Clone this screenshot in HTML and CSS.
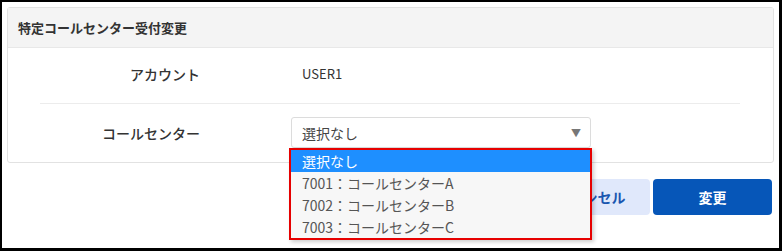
FILE: index.html
```html
<!DOCTYPE html>
<html lang="ja">
<head>
    <meta charset="UTF-8">
    <meta name="viewport" content="width=device-width, initial-scale=1.0">
    <title>特定コールセンター受付変更</title>
    <link rel="stylesheet" href="styles.css">
</head>
<body>
    <div class="screen">
        <div class="panel">
            <div class="panel-head">特定コールセンター受付変更</div>
            <div class="panel-body">
                <div class="row row-account">
                    <div class="label">アカウント</div>
                    <div class="value value-text">USER1</div>
                </div>
                <div class="row row-select">
                    <div class="label">コールセンター</div>
                    <div class="value">
                        <div class="select">
                            <span>選択なし</span>
                            <span class="arrow">▼</span>
                            <ul class="options">
                                <li class="selected">選択なし</li>
                                <li>7001：コールセンターA</li>
                                <li>7002：コールセンターB</li>
                                <li>7003：コールセンターC</li>
                            </ul>
                        </div>
                    </div>
                </div>
            </div>
        </div>
        <div class="actions">
            <button class="btn btn-cancel">キャンセル</button>
            <button class="btn btn-primary">変更</button>
        </div>
    </div>
</body>
</html>
```

FILE: styles.css
```css
html, body { margin: 0; height: 100%; }
body { background: #000; font-family: "Noto Sans CJK JP", "Noto Sans", sans-serif; }

.screen { box-sizing: border-box; width: 782px; height: 251px; border-style: solid; border-color: #000; border-width: 2px 3px 3px 2px; background: #fff; padding: 5px; }

.panel { border: 1px solid #e2e2e2; border-radius: 3px; }
.panel-head { display: flex; align-items: center; height: 39px; padding-left: 10px; background: #f4f4f4; border-bottom: 1px solid #e8e8e8; font-size: 13px; line-height: 1; font-weight: bold; color: #333; }
.panel-body { padding: 0 33px 0 32px; }

.row { display: flex; align-items: center; }
.row + .row { border-top: 1px solid #ececec; }
.row-account { box-sizing: border-box; height: 55px; padding-bottom: 4px; }
.row-select { height: 58px; }

.label { width: 160px; text-align: right; font-size: 14px; line-height: 1; font-weight: 500; color: #333; }
.value { margin-left: 91px; }
.value-text { padding-left: 11px; font-size: 13px; line-height: 1; color: #333; }

.select { position: relative; box-sizing: border-box; width: 300px; height: 31px; margin-top: -1px; border: 1px solid #dcdcdc; border-radius: 3px; display: flex; align-items: center; justify-content: space-between; padding: 0 9px 0 10px; font-size: 14px; line-height: 1; color: #444; background: #fff; }
.arrow { font-size: 10px; color: #777; }

.options { position: absolute; top: 30px; left: -3px; width: 303px; box-sizing: border-box; margin: 0; padding: 0; list-style: none; border: 2px solid #e60000; background: #f7f7f7; box-shadow: 2px 2px 4px rgba(0, 0, 0, 0.2); }
.options li { display: flex; align-items: center; height: 22px; padding-left: 11px; font-size: 14px; line-height: 1; color: #555; }
.options li.selected { background: #1e8fff; color: #fff; }

.actions { display: flex; justify-content: flex-end; gap: 3px; margin-top: 16px; padding-right: 2px; }
.btn { width: 119px; height: 36px; border: none; border-radius: 4px; font-family: inherit; font-size: 14px; font-weight: bold; cursor: pointer; }
.btn-cancel { background: #e0e8fb; color: #1a56b0; }
.btn-primary { background: #0656b8; color: #fff; }
```
